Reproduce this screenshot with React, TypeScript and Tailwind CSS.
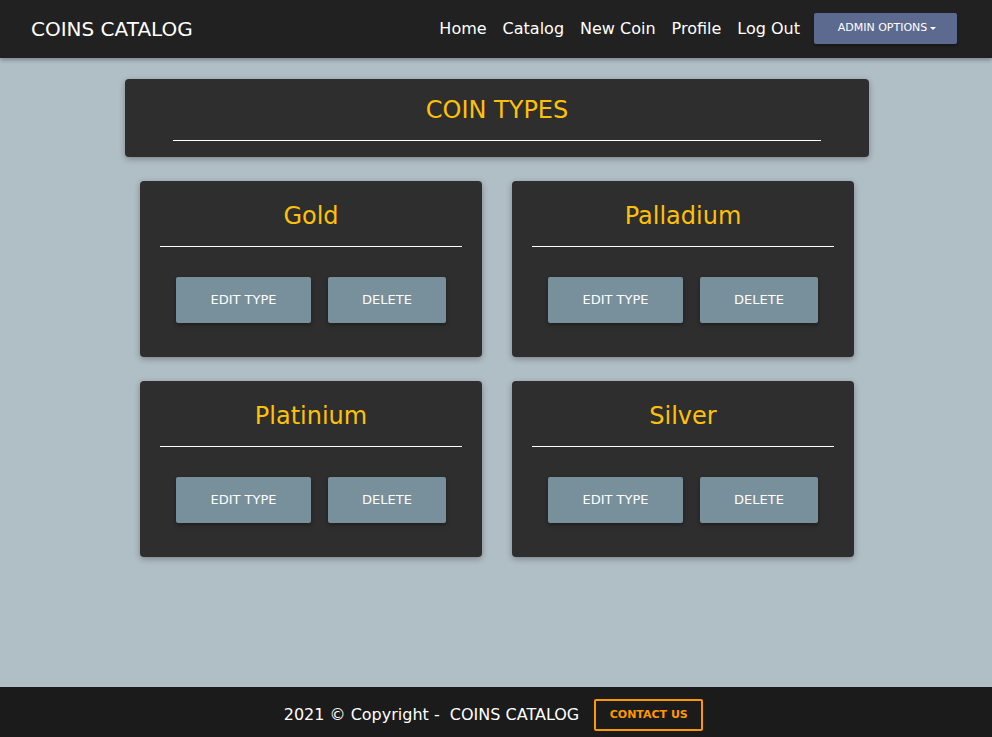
import React from "react";

const types = ["Gold", "Palladium", "Platinium", "Silver"];

function TypeCard({ name }: { name: string }) {
  return (
    <div className="bg-[#2e2e2e] rounded-[4px] shadow-[0_2px_6px_rgba(0,0,0,0.3)] h-[176px] px-5 pt-[20px]">
      <div className="text-[24px] leading-[30px] text-[#ffc107] text-center">{name}</div>
      <div className="h-px bg-white mt-[15px]" />
      <div className="flex justify-center gap-[17px] mt-[30px]">
        <button className="w-[135px] h-[46px] bg-[#78909c] rounded-[2px] text-white text-[13px] shadow-[0_2px_4px_rgba(0,0,0,0.35)]">
          EDIT TYPE
        </button>
        <button className="w-[118px] h-[46px] bg-[#78909c] rounded-[2px] text-white text-[13px] shadow-[0_2px_4px_rgba(0,0,0,0.35)]">
          DELETE
        </button>
      </div>
    </div>
  );
}

export default function App() {
  return (
    <div className="min-h-[737px] flex flex-col bg-[#b0bec5] font-['DejaVu_Sans',sans-serif]">
      <nav className="h-[58px] bg-[#212121] flex items-center pl-[32px] pr-[35px] shadow-[0_2px_4px_rgba(0,0,0,0.3)]">
        <div className="text-white text-[20px] ml-[-1px]">COINS CATALOG</div>
        <div className="ml-auto flex items-center gap-[16px] text-white text-[16px]">
          <span>Home</span>
          <span>Catalog</span>
          <span>New Coin</span>
          <span>Profile</span>
          <span>Log Out</span>
          <button className="ml-[-2px] mt-[-1px] w-[143px] h-[31px] bg-[#5b6a8e] rounded-[2px] text-white text-[11px] flex items-center justify-center gap-[3px] pl-[3px] shadow-[0_2px_3px_rgba(0,0,0,0.3)]">
            ADMIN OPTIONS
            <span className="inline-block w-0 h-0 border-l-[3px] border-r-[3px] border-t-[3px] border-l-transparent border-r-transparent border-t-white" />
          </button>
        </div>
      </nav>

      <main className="flex-1 flex flex-col items-center pt-[21px]">
        <div className="w-[744px] h-[78px] ml-[2px] bg-[#2e2e2e] rounded-[4px] shadow-[0_2px_6px_rgba(0,0,0,0.3)] px-12 pt-[16px]">
          <div className="text-[24px] leading-[30px] text-[#ffc107] text-center">COIN TYPES</div>
          <div className="h-px bg-white mt-[15px]" />
        </div>
        <div className="w-[714px] grid grid-cols-2 gap-x-[30px] gap-y-[24px] mt-[24px] ml-[2px]">
          {types.map((t) => (
            <TypeCard key={t} name={t} />
          ))}
        </div>
      </main>

      <footer className="h-[50px] bg-[#1b1b1b] flex items-center justify-center gap-[15px] pt-[6px] pr-[5px]">
        <span className="text-white text-[16px]">2021 © Copyright -&nbsp; COINS CATALOG</span>
        <button className="w-[109px] h-[32px] border-2 border-[#ff9800] rounded-[2px] text-[#ff9800] text-[11px] font-bold">
          CONTACT US
        </button>
      </footer>
    </div>
  );
}
